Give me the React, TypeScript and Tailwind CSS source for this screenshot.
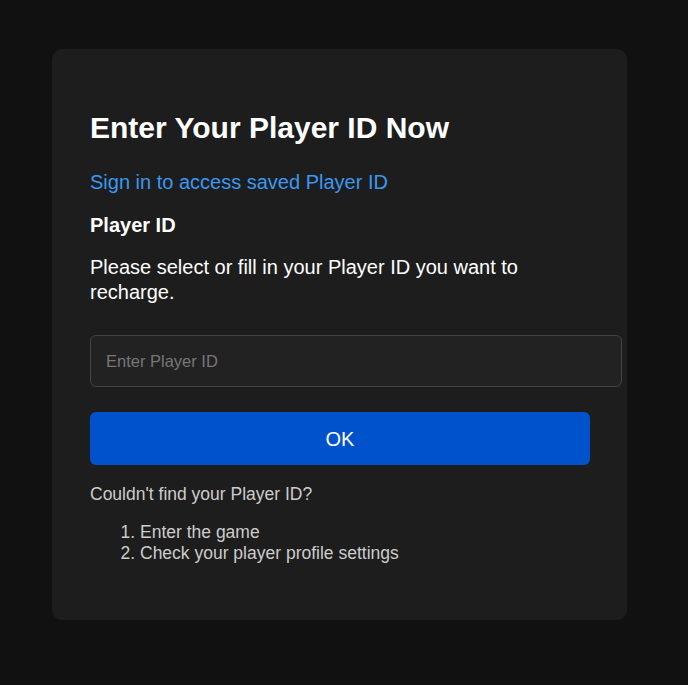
const App = () => {
  return (
    <div className="min-h-[685px] w-full bg-[#111111] pt-[49px] pb-[65px] font-['Liberation_Sans',Arial,sans-serif]">
      <div className="ml-[52px] w-[575px] rounded-[10px] bg-[#1d1d1d] pl-[38px] pr-[37px] pt-[63px] pb-[56px]">
        <h2 className="text-[30px] leading-[32px] font-bold text-white">
          Enter Your Player ID Now
        </h2>

        <a href="#" className="mt-[26px] block text-[20px] leading-[24px] text-[#3a98f0]">
          Sign in to access saved Player ID
        </a>

        <div className="mt-[19px] text-[20px] leading-[24px] font-bold text-white">Player ID</div>

        <p className="mt-[18px] text-[20px] leading-[25px] text-white">
          Please select or fill in your Player ID you want to recharge.
        </p>

        <input
          type="text"
          placeholder="Enter Player ID"
          className="mt-[30px] block h-[52px] w-[532px] rounded-[6px] border border-[#444444] bg-[#222222] px-[15px] text-[16.5px] text-white placeholder:text-[#777777] outline-none"
        />

        <button className="mt-[25px] block h-[53px] w-full rounded-[6px] bg-[#0052cc] text-[20px] text-white">
          OK
        </button>

        <p className="mt-[19px] text-[17.5px] leading-[20px] text-[#cccccc]">
          Couldn't find your Player ID?
        </p>

        <ol className="mt-[18px] list-decimal pl-[50px] text-[17.5px] leading-[21px] text-[#cccccc]">
          <li>Enter the game</li>
          <li>Check your player profile settings</li>
        </ol>
      </div>
    </div>
  );
};

export default App;
